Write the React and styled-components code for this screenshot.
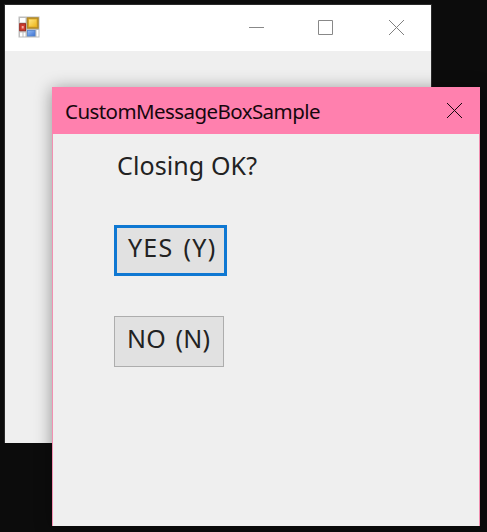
import React from 'react';
import styled, { createGlobalStyle } from 'styled-components';

const GlobalStyle = createGlobalStyle`
  * { box-sizing: border-box; }
  body { margin: 0; background: #0c0c0c; overflow: hidden; }
`;

const Desktop = styled.main`
  position: relative;
  width: 487px;
  height: 532px;
  overflow: hidden;
  background: #0c0c0c;
  color: #222;
  font-family: 'Noto Sans', 'Open Sans', sans-serif;
`;

const MainWindow = styled.section`
  position: absolute;
  left: 4px;
  top: 4px;
  width: 428px;
  height: 439px;
  border: 1px solid #2b2b2b;
  border-bottom: 0;
  background: #efefef;
`;

const Dialog = styled.section`
  position: absolute;
  left: 52px;
  top: 87px;
  width: 428px;
  height: 439px;
  display: flex;
  flex-direction: column;
  border: 1px solid #f28fb1;
  border-top: 0;
  border-bottom: 0;
  background: #efefef;
  box-shadow: 0 2px 16px rgba(0, 0, 0, 0.4);
`;

const TitleBar = styled.header`
  display: flex;
  align-items: center;
  height: 46px;
  padding: 0 27px 2px 13px;
  background: #fff;
`;

const DialogTitleBar = styled(TitleBar)`
  height: 47px;
  margin: 0 -1px;
  padding: 0 18px 0 13px;
  justify-content: space-between;
  background: #ff80ae;
`;

const Controls = styled.div`
  display: grid;
  grid-template-columns: 69px 71px 15px;
  margin: 1px 0 0 auto;
`;

const Title = styled.h1`
  margin: 0;
  color: #16070d;
  font-size: 20.5px;
  font-weight: 400;
  line-height: 28px;
  letter-spacing: -0.57px;
  white-space: nowrap;
`;

const Content = styled.div`
  display: flex;
  flex-direction: column;
  align-items: flex-start;
  padding: 14px 0 0 61px;
`;

const Message = styled.p`
  margin: 0 0 43px 3px;
  font-size: 25px;
  line-height: 34px;
  letter-spacing: 0.1px;
  white-space: nowrap;
`;

const Button = styled.button`
  display: block;
  width: ${(p) => (p.$focused ? 113 : 110)}px;
  height: 51px;
  margin: 0 0 40px;
  padding: 0 0 ${(p) => (p.$focused ? 7 : 8)}px ${(p) => (p.$focused ? 11 : 12)}px;
  border: ${(p) => (p.$focused ? '3px solid #0f78d2' : '1px solid #adadad')};
  background: #e1e1e1;
  color: #222;
  font: 25px 'Noto Sans', 'Open Sans', sans-serif;
  line-height: 30px;
  letter-spacing: ${(p) => p.$tracking}px;
  word-spacing: 2.5px;
  text-align: left;
  white-space: nowrap;
`;

const Glyph = styled.svg`
  display: block;
  flex: none;
  fill: none;
  stroke: ${(p) => p.$color};
  stroke-width: 1;
`;

const AppIcon = () => (
  <svg width="22" height="22" viewBox="0 0 22 22" aria-hidden="true">
    <defs>
      <linearGradient id="gold" x1="0" y1="0" x2="1" y2="1">
        <stop offset="0" stopColor="#ffe680" />
        <stop offset="1" stopColor="#edb71c" />
      </linearGradient>
      <linearGradient id="blue" x1="0" y1="0" x2="1" y2="1">
        <stop offset="0" stopColor="#94bdf5" />
        <stop offset="1" stopColor="#3c70d2" />
      </linearGradient>
    </defs>
    <rect x="0.5" y="0.5" width="21" height="21" fill="#bdbdbd" />
    <rect x="2" y="2" width="5.5" height="4.5" fill="#fff" />
    <rect x="2" y="16.5" width="2.5" height="4" fill="#fff" />
    <rect x="5.5" y="16.5" width="2" height="4" fill="#fff" />
    <rect x="18.5" y="14" width="2" height="6.5" fill="#fff" />
    <rect x="9.5" y="2" width="10.5" height="10" fill="#e2ad27" stroke="#b38a27" strokeWidth="1.5" />
    <rect x="11" y="3.5" width="7.5" height="7" fill="url(#gold)" />
    <rect x="1.7" y="7.7" width="5.8" height="7" fill="#cf3d2e" stroke="#9b2b22" />
    <rect x="3.7" y="10" width="2" height="2.5" fill="#f3aaa0" />
    <rect x="9.5" y="14.5" width="7.5" height="5.5" fill="url(#blue)" stroke="#5484cd" strokeWidth="0.8" />
  </svg>
);

const MinimizeIcon = () => (
  <Glyph width="15" height="15" viewBox="0 0 15 15" $color="#888"><path d="M0 7.5H15" /></Glyph>
);
const MaximizeIcon = () => (
  <Glyph width="15" height="15" viewBox="0 0 15 15" $color="#888"><path d="M.5.5h14v14H.5z" /></Glyph>
);
const CloseIcon = ({ color }) => (
  <Glyph width="15" height="15" viewBox="0 0 15 15" $color={color}><path d="M0 0 15 15M15 0 0 15" /></Glyph>
);

export default function App() {
  return (
    <Desktop>
      <GlobalStyle />
      <MainWindow>
        <TitleBar>
          <AppIcon />
          <Controls>
            <MinimizeIcon />
            <MaximizeIcon />
            <CloseIcon color="#808080" />
          </Controls>
        </TitleBar>
      </MainWindow>
      <Dialog>
        <DialogTitleBar>
          <Title>CustomMessageBoxSample</Title>
          <CloseIcon color="#16070d" />
        </DialogTitleBar>
        <Content>
          <Message>Closing OK?</Message>
          <Button $focused $tracking={1.2}>YES (Y)</Button>
          <Button $tracking={0.3}>NO (N)</Button>
        </Content>
      </Dialog>
    </Desktop>
  );
}
